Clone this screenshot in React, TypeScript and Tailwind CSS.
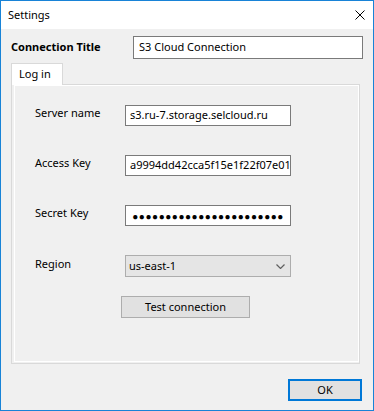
import React from 'react';

const font = { fontFamily: '"Noto Sans", "Open Sans", sans-serif' };

function Field({ label, children }: { label: string; children: React.ReactNode }) {
  return (
    <div className="flex items-start h-[21px]">
      <div className="w-[90px] pt-[1px] text-[11px] leading-[14px] text-black">{label}</div>
      {children}
    </div>
  );
}

function TextBox({ value }: { value: string }) {
  return (
    <div className="w-[166px] h-[21px] bg-white border border-[#7a7a7a] flex items-center pl-[4px] text-[11px] text-black whitespace-nowrap overflow-hidden">
      {value}
    </div>
  );
}

export default function App() {
  const dots = Array.from({ length: 23 });

  return (
    <div
      className="w-[374px] h-[411px] border border-[#1883d7] bg-[#f0f0f0] flex flex-col overflow-hidden"
      style={font}
    >
      {/* title bar */}
      <div className="h-[28px] bg-white flex items-center justify-between pl-[7px] pr-[7px] shrink-0">
        <span className="text-[11px] text-black">Settings</span>
        <svg width="10" height="10" viewBox="0 0 10 10" className="mr-[1px]">
          <path d="M0.5 0.5 L9.5 9.5 M9.5 0.5 L0.5 9.5" stroke="#000" strokeWidth="1" />
        </svg>
      </div>

      <div className="flex flex-col pl-[10px] pr-[10px]">
        {/* connection title */}
        <div className="flex items-center mt-[7px]">
          <div className="w-[122px] text-[11px] font-bold text-black">Connection Title</div>
          <div className="w-[230px] h-[23px] bg-white border border-[#7a7a7a] flex items-center pl-[5px] text-[11px] text-black">
            S3 Cloud Connection
          </div>
        </div>

        {/* tab header */}
        <div className="mt-[4px] flex">
          <div className="w-[52px] h-[22px] bg-white border border-b-0 border-[#d9d9d9] pl-[7px] text-[11px] leading-[20px] text-black relative z-10">
            Log in
          </div>
        </div>

        {/* tab page */}
        <div className="-mt-[1px] w-[349px] h-[280px] border border-[#d9d9d9]">
          <div className="ml-[2px] mb-[1px] h-[277px] border border-white flex flex-col">
            <div className="flex flex-col pl-[20px] pt-[19px] gap-[29px]">
              <Field label="Server name">
                <TextBox value="s3.ru-7.storage.selcloud.ru" />
              </Field>
              <Field label="Access Key">
                <TextBox value="a9994dd42cca5f15e1f22f07e01" />
              </Field>
              <Field label="Secret Key">
                <div className="w-[166px] h-[21px] bg-white border border-[#7a7a7a] flex items-center pl-[6px]">
                  {dots.map((_, i) => (
                    <span key={i} className="w-[6.6px] text-[10px] leading-[10px] text-black text-center">
                      ●
                    </span>
                  ))}
                </div>
              </Field>
              <div className="flex items-start h-[22px]">
                <div className="w-[90px] text-[11px] leading-[14px] text-black pt-[2px]">Region</div>
                <div className="w-[166px] h-[22px] bg-[#e5e5e5] border border-[#adadad] flex items-center justify-between pl-[3px] pr-[5px] text-[11px] text-black">
                  <span>us-east-1</span>
                  <svg width="9" height="5" viewBox="0 0 9 5">
                    <path d="M0.5 0.5 L4.5 4.5 L8.5 0.5" fill="none" stroke="#606060" strokeWidth="1.2" />
                  </svg>
                </div>
              </div>
            </div>
            <div className="mt-[19px] pl-[106px]">
              <div className="w-[129px] h-[22px] bg-[#e1e1e1] border border-[#adadad] flex items-center justify-center text-[11px] text-black">
                Test connection
              </div>
            </div>
          </div>
        </div>

        {/* footer */}
        <div className="mt-[15px] flex justify-end pr-[1px]">
          <div className="w-[74px] h-[22px] bg-[#e1e1e1] border-2 border-[#0078d7] flex items-center justify-center text-[11px] text-black">
            OK
          </div>
        </div>
      </div>
    </div>
  );
}
